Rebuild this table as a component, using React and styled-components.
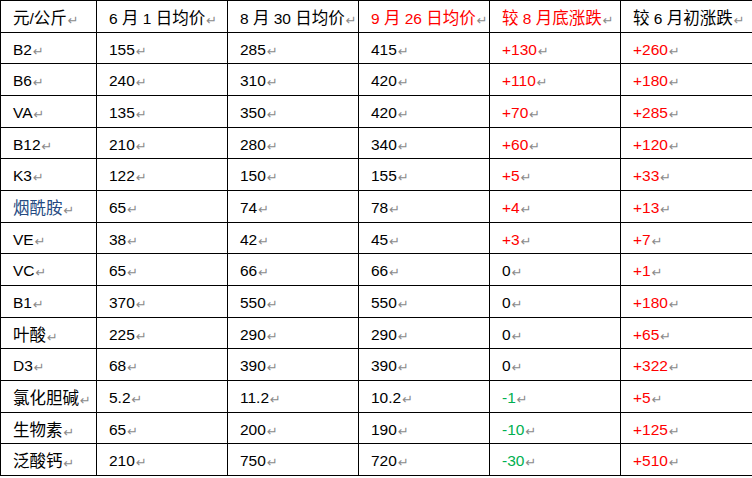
import React from 'react'
import styled, { createGlobalStyle } from 'styled-components'

const GlobalStyle = createGlobalStyle`
  html, body {
    margin: 0;
    padding: 0;
    background: #ffffff;
    overflow: hidden;
  }
  body {
    font-family: 'Liberation Sans', 'Noto Sans CJK SC', sans-serif;
  }
`

const Grid = styled.div`
  display: grid;
  grid-template-columns: 96px 131px 131px 131px 131px 132px;
  grid-auto-rows: 31.67px;
  width: 753px;
  border-top: 1px solid #000;
  border-left: 1px solid #000;
`

const Cell = styled.div`
  display: flex;
  align-items: center;
  padding: 3px 0 0 12px;
  border-right: 1px solid #000;
  border-bottom: 1px solid #000;
  font-size: 15.5px;
  color: ${(p) => p.$color || '#000'};
  white-space: pre;
  overflow: hidden;
  box-sizing: border-box;
`

const Text = styled.span`
  font-family: 'Liberation Sans', 'Noto Sans CJK SC', sans-serif;
  line-height: 1;
`

const Han = styled.span`
  font-family: 'Noto Sans CJK SC', sans-serif;
  font-size: 16.5px;
`

const Mark = styled.span`
  font-family: 'DejaVu Sans', sans-serif;
  font-size: 13px;
  color: #8a8a8a;
  margin-left: 1px;
  position: relative;
  top: 1px;
`

const RED = '#ff0000'
const GREEN = '#00b050'
const BLUE = '#254a82'

const header = [
  { text: '元/公斤' },
  { text: '6 月 1 日均价' },
  { text: '8 月 30 日均价' },
  { text: '9 月 26 日均价', color: RED },
  { text: '较 8 月底涨跌', color: RED },
  { text: '较 6 月初涨跌' },
]

const rows = [
  ['B2', '155', '285', '415', '+130', '+260'],
  ['B6', '240', '310', '420', '+110', '+180'],
  ['VA', '135', '350', '420', '+70', '+285'],
  ['B12', '210', '280', '340', '+60', '+120'],
  ['K3', '122', '150', '155', '+5', '+33'],
  ['烟酰胺', '65', '74', '78', '+4', '+13'],
  ['VE', '38', '42', '45', '+3', '+7'],
  ['VC', '65', '66', '66', '0', '+1'],
  ['B1', '370', '550', '550', '0', '+180'],
  ['叶酸', '225', '290', '290', '0', '+65'],
  ['D3', '68', '390', '390', '0', '+322'],
  ['氯化胆碱', '5.2', '11.2', '10.2', '-1', '+5'],
  ['生物素', '65', '200', '190', '-10', '+125'],
  ['泛酸钙', '210', '750', '720', '-30', '+510'],
]

// split text so CJK runs get their own (slightly larger) font
function renderText(text) {
  const parts = text.split(/([\u3400-\u9fff]+)/).filter(Boolean)
  return parts.map((part, i) =>
    /[\u3400-\u9fff]/.test(part) ? <Han key={i}>{part}</Han> : part
  )
}

function changeColor(value) {
  if (value.startsWith('+')) return RED
  if (value.startsWith('-')) return GREEN
  return '#000'
}

function cellColor(row, col) {
  if (col === 0 && row[0] === '烟酰胺') return BLUE
  if (col === 4) return changeColor(row[col])
  if (col === 5) return RED
  return '#000'
}

export default function App() {
  return (
    <>
      <GlobalStyle />
      <Grid>
        {header.map((h) => (
          <Cell key={h.text} $color={h.color}>
            <Text>
              {renderText(h.text)}
              <Mark>↵</Mark>
            </Text>
          </Cell>
        ))}
        {rows.map((row) =>
          row.map((value, col) => (
            <Cell key={row[0] + col} $color={cellColor(row, col)}>
              <Text>
                {renderText(value)}
                <Mark>↵</Mark>
              </Text>
            </Cell>
          ))
        )}
      </Grid>
    </>
  )
}
